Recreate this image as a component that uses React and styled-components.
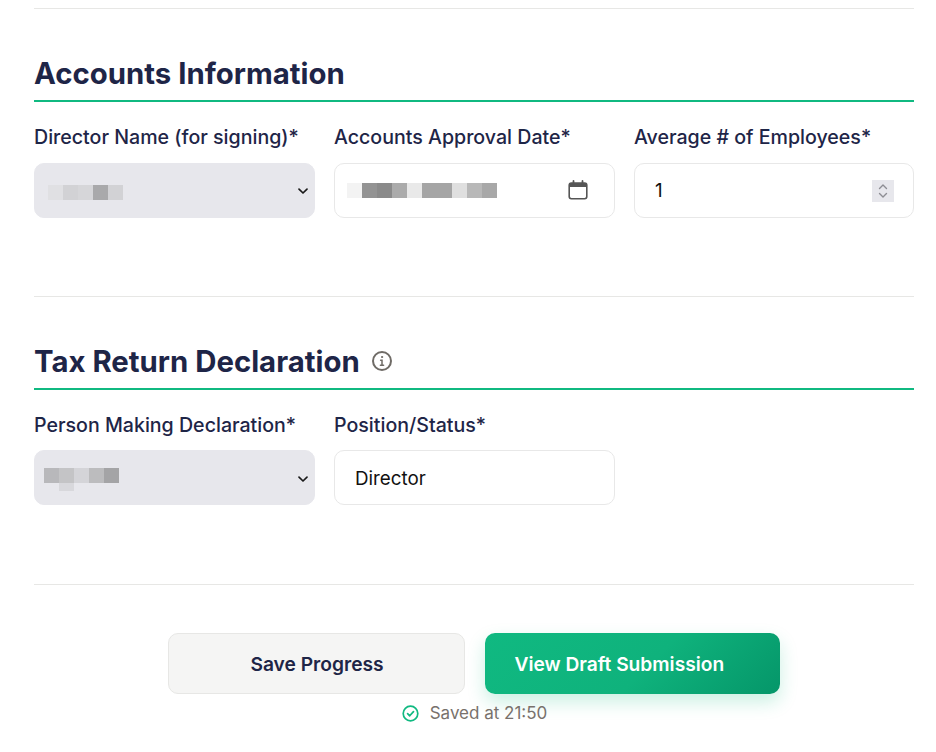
import React from 'react'
import styled, { createGlobalStyle } from 'styled-components'

const GlobalStyle = createGlobalStyle`
  html, body { margin: 0; padding: 0; background: #fff; }
  body { font-family: Inter, "Liberation Sans", sans-serif; }
  * { box-sizing: border-box; }
`

const Page = styled.div`
  width: 936px;
  height: 752px;
  padding: 8px 22px 0 34px;
  overflow: hidden;
`

const Divider = styled.hr`
  margin: 0;
  border: 0;
  border-top: 1px solid #e7e7e5;
`

const Section = styled.section`
  height: 287px;
  padding-top: 45px;
`

const Heading = styled.h2`
  display: flex;
  align-items: center;
  gap: 11px;
  height: 48px;
  margin: 0;
  padding-bottom: 8px;
  border-bottom: 2px solid #10b981;
  font-size: 29.35px;
  font-weight: 700;
  line-height: 39px;
  color: #1e2547;
`

const Fields = styled.div`
  display: grid;
  grid-template-columns: 281px 281px 280px;
  gap: 19px;
  margin-top: 22px;
`

const Field = styled.div`
  display: flex;
  flex-direction: column;
  gap: ${p => p.$gap || 13}px;
`

const Label = styled.label`
  font-size: 19.6px;
  font-weight: 500;
  line-height: 26px;
  white-space: nowrap;
  color: #1e2547;
`

const Box = styled.div`
  display: flex;
  align-items: center;
  justify-content: space-between;
  height: 55px;
  padding: ${p => p.$nudge || 0}px ${p => p.$right || 20}px 0 ${p => p.$left || 20}px;
  border-radius: 10px;
  border: 1px solid ${p => (p.$select ? '#e7e7ec' : '#e8e8e8')};
  background: ${p => (p.$select ? '#e7e7ec' : '#fff')};
  font-size: 18.8px;
  color: #111;
`

const Redacted = styled.div`
  display: flex;
  flex-wrap: wrap;
  width: ${p => p.$cells * 15}px;
  margin-top: ${p => p.$top || 0}px;
`

const Cell = styled.span`
  width: 15px;
  height: ${p => (p.$short ? 8 : 15)}px;
  background: ${p => p.$color};
`

const Spinner = styled.div`
  display: flex;
  align-items: center;
  justify-content: center;
  width: 22px;
  height: 22px;
  background: #e7e7ec;
`

const Actions = styled.div`
  display: flex;
  justify-content: center;
  gap: 20px;
  margin-top: 48px;
  padding-right: 1px;
`

const Button = styled.button`
  height: 61px;
  border-radius: 10px;
  font-family: inherit;
  font-size: 19.2px;
  font-weight: 600;
`

const SaveButton = styled(Button)`
  width: 297px;
  padding: 0 0 0 2px;
  border: 1px solid #e7e7e5;
  background: #f5f5f4;
  color: #1e2547;
`

const DraftButton = styled(Button)`
  width: 295px;
  padding: 0 0 0 30px;
  border: 0;
  text-align: left;
  color: #fff;
  background: linear-gradient(135deg, #10b981 0%, #0fb27c 55%, #059669 100%);
  box-shadow: 0 8px 18px rgba(16, 185, 129, 0.22);
`

const SavedNote = styled.div`
  display: flex;
  align-items: center;
  justify-content: center;
  gap: 11px;
  margin-top: 8px;
  padding-left: 1px;
  font-size: 17px;
  line-height: 22px;
  color: #78716c;
`

const CalendarSlot = styled.span`
  display: flex;
  margin: 0 1px 2px 0;
`

const Chevron = () => (
  <svg width="12" height="12" viewBox="0 0 12 12" fill="none" stroke="#1a1a1a" strokeWidth="1.7" strokeLinecap="round" strokeLinejoin="round">
    <path d="M2 4.2 6 8l4-3.8" />
  </svg>
)

const Calendar = () => (
  <svg width="20" height="20" viewBox="0 0 20 20" fill="none">
    <rect x="1.2" y="3" width="17.6" height="15.8" rx="2.2" stroke="#555" strokeWidth="1.6" />
    <path d="M1.2 5.2a2.2 2.2 0 0 1 2.2-2.2h13.2a2.2 2.2 0 0 1 2.2 2.2V7H1.2z" fill="#555" />
    <path d="M5.5 1v3M14.5 1v3" stroke="#555" strokeWidth="1.8" strokeLinecap="round" />
  </svg>
)

const Stepper = () => (
  <svg width="14" height="18" viewBox="0 0 14 18" fill="none" stroke="#8d8d93" strokeWidth="1.4" strokeLinecap="round" strokeLinejoin="round">
    <path d="M3.5 6.5 7 3l3.5 3.5M3.5 11.5 7 15l3.5-3.5" />
  </svg>
)

const InfoIcon = () => (
  <svg width="22" height="22" viewBox="0 0 22 22" fill="none" stroke="#6f6b66" strokeLinecap="round">
    <circle cx="11" cy="11" r="9" strokeWidth="2" />
    <path d="M9.6 10.2H11v5M9.4 15.2h3.2" strokeWidth="1.5" />
    <circle cx="11" cy="7" r="0.6" fill="#6f6b66" strokeWidth="1" />
  </svg>
)

const CheckIcon = () => (
  <svg width="17" height="17" viewBox="0 0 17 17" fill="none" stroke="#10b981" strokeWidth="1.7" strokeLinecap="round" strokeLinejoin="round">
    <circle cx="8.5" cy="8.5" r="7.3" />
    <path d="M5.6 8.7 7.7 10.8 11.5 6.6" />
  </svg>
)

function Blur({ colors, below, top }) {
  return (
    <Redacted $cells={colors.length} $top={top}>
      {colors.map((c, i) => <Cell key={i} $color={c} />)}
      {below && below.map((c, i) => <Cell key={i} $short $color={c} />)}
    </Redacted>
  )
}

export default function App() {
  return (
    <Page>
      <GlobalStyle />
      <Divider />
      <Section>
        <Heading>Accounts Information</Heading>
        <Fields>
          <Field>
            <Label>Director Name (for signing)*</Label>
            <Box $select $left={13} $right={5}>
              <Blur colors={['#e0e0e3', '#d2d2d5', '#d6d6d9', '#a9a9ab', '#d2d2d5']} top={4} />
              <Chevron />
            </Box>
          </Field>
          <Field>
            <Label>Accounts Approval Date*</Label>
            <Box $left={12} $right={25}>
              <Blur colors={['#f3f3f3', '#939393', '#8a8a8a', '#ababab', '#e9e9e9', '#a5a5a5', '#a5a5a5', '#dfdfdf', '#b8b8b8', '#a8a8a8']} />
              <CalendarSlot><Calendar /></CalendarSlot>
            </Box>
          </Field>
          <Field>
            <Label>Average # of Employees*</Label>
            <Box $right={19}>
              1
              <Spinner><Stepper /></Spinner>
            </Box>
          </Field>
        </Fields>
      </Section>
      <Divider />
      <Section>
        <Heading>Tax Return Declaration <InfoIcon /></Heading>
        <Fields>
          <Field $gap={12}>
            <Label>Person Making Declaration*</Label>
            <Box $select $nudge={2} $left={9} $right={5}>
              <Blur
                colors={['#b8b8bb', '#c4c4c6', '#d4d4d8', '#bcbcbe', '#a4a4a6']}
                below={['transparent', '#d8d8dc']}
                top={2}
              />
              <Chevron />
            </Box>
          </Field>
          <Field $gap={12}>
            <Label>Position/Status*</Label>
            <Box $nudge={2}>Director</Box>
          </Field>
        </Fields>
      </Section>
      <Divider />
      <Actions>
        <SaveButton>Save Progress</SaveButton>
        <DraftButton>View Draft Submission</DraftButton>
      </Actions>
      <SavedNote>
        <CheckIcon />
        Saved at 21:50
      </SavedNote>
    </Page>
  )
}
